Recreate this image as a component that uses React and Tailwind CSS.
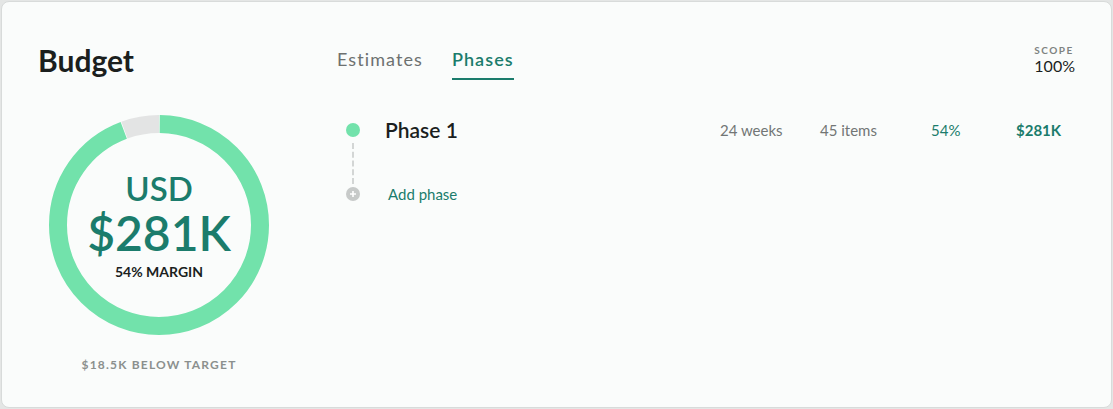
import React from "react";

const FONT = { fontFamily: "Lato, 'Noto Sans', sans-serif" };

function Donut() {
  const r = 101;
  const c = 2 * Math.PI * r;
  const deg = (d) => (c * d) / 360;
  const green = deg(338.6);
  const gray = deg(20.2);
  return (
    <div className="relative w-[220px] h-[220px]">
      <svg width="220" height="220" viewBox="0 0 220 220" className="-rotate-90">
        <circle
          cx="110"
          cy="110"
          r={r}
          fill="none"
          stroke="#72e2ab"
          strokeWidth="18"
          strokeDasharray={`${green} ${c}`}
          strokeDashoffset={-deg(0.4)}
        />
        <circle
          cx="110"
          cy="110"
          r={r}
          fill="none"
          stroke="#e3e4e4"
          strokeWidth="18"
          strokeDasharray={`${gray} ${c}`}
          strokeDashoffset={-deg(339.4)}
        />
      </svg>
      <div className="absolute inset-0 flex flex-col items-center justify-center pt-[2px]">
        <div className="text-[33px] leading-[30px] font-semibold text-[#1b7c6c]">USD</div>
        <div className="text-[48px] leading-[44px] font-semibold text-[#1b7c6c] mt-[8px]">$281K</div>
        <div className="text-[14px] leading-[16px] font-bold text-[#1b1f1e] mt-[9px]">54% MARGIN</div>
      </div>
    </div>
  );
}

export default function App() {
  return (
    <div className="w-[1113px] h-[409px] bg-[#e4e6e5] p-px" style={FONT}>
      <div className="h-full rounded-lg border border-[#d8dbda] bg-[#fafcfb] flex pl-[36px] pr-[36px]">
        {/* Left: budget summary */}
        <div className="w-[242px] flex flex-col">
          <h1 className="text-[30px] font-bold text-[#1b1f1e] leading-none mt-[43px]">Budget</h1>
          <div className="flex justify-center mt-[40px]">
            <Donut />
          </div>
          <div className="text-center text-[12px] font-bold tracking-[0.1em] text-[#8b908e] mt-[21px]">
            $18.5K BELOW TARGET
          </div>
        </div>

        {/* Right: tabs + phases */}
        <div className="flex-1 ml-[57px] flex flex-col">
          <div className="flex items-start justify-between">
            <div className="flex gap-[29px] mt-[44px] text-[18px] tracking-[0.06em]">
              <div className="text-[#6d7170] pb-[5px]">Estimates</div>
              <div className="text-[#1b7c6c] font-semibold border-b-2 border-[#1b7c6c] pb-[5px]">Phases</div>
            </div>
            <div className="mt-[41px] text-left">
              <div className="text-[10px] font-bold tracking-[0.15em] text-[#7e8381] leading-[14px]">SCOPE</div>
              <div className="text-[16px] text-[#1b1f1e] leading-[18px]">100%</div>
            </div>
          </div>

          <div className="mt-[38px] pl-[9px]">
            <div className="flex items-center h-[24px]">
              <div className="w-[14px] h-[14px] rounded-full bg-[#72e2ab]" />
              <div className="ml-[25px] w-[335px] text-[21px] font-semibold text-[#1b1f1e]">Phase 1</div>
              <div className="w-[100px] text-[15px] text-[#727675]">24 weeks</div>
              <div className="w-[111px] text-[15px] text-[#727675]">45 items</div>
              <div className="w-[85px] text-[15px] text-[#1b7c6c]">54%</div>
              <div className="text-[15px] font-bold text-[#1b7c6c]">$281K</div>
            </div>
            <div className="w-[14px] flex justify-center">
              <div className="h-[41px] border-l-2 border-dashed border-[#d3d6d5] my-[1px]" />
            </div>
            <div className="flex items-center h-[18px]">
              <div className="w-[14px] h-[14px] rounded-full bg-[#c7cac9] flex items-center justify-center">
                <svg width="8" height="8" viewBox="0 0 8 8">
                  <path d="M4 1v6M1 4h6" stroke="#fff" strokeWidth="1.6" />
                </svg>
              </div>
              <div className="ml-[28px] text-[15px] text-[#1b7c6c]">Add phase</div>
            </div>
          </div>
        </div>
      </div>
    </div>
  );
}
